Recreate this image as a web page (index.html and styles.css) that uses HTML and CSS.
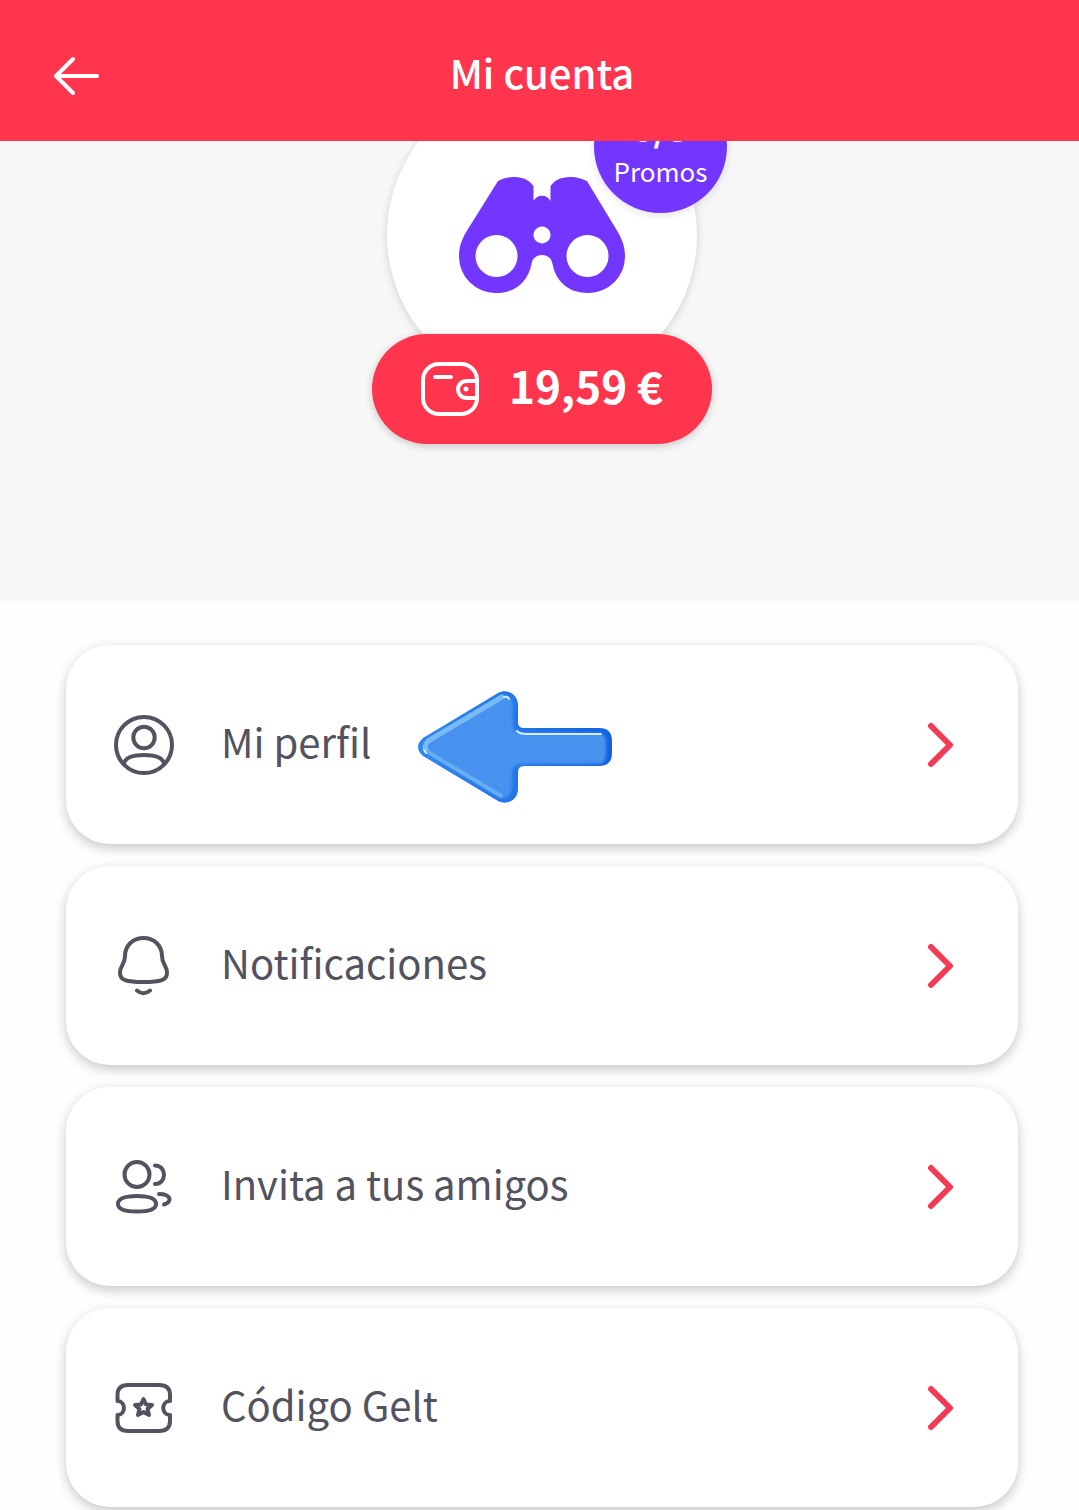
FILE: index.html
```
<!DOCTYPE html>
<html lang="es">
<head>
    <meta charset="UTF-8">
    <meta name="viewport" content="width=device-width, initial-scale=1.0">
    <title>Mi cuenta</title>
    <link rel="stylesheet" href="styles.css">
</head>
<body>
    <header class="topbar">
        <button class="back-btn" type="button" aria-label="Volver">
            <svg width="48" height="40" viewBox="0 0 48 40">
                <path d="M20 3 L3 20 L20 37 M3 20 H44"/>
            </svg>
        </button>
        <h1 class="title">Mi cuenta</h1>
    </header>

    <section class="hero">
        <div class="avatar">
            <svg width="166" height="116" viewBox="0 0 166 116">
                <path fill-rule="evenodd" d="M39 4 C50 -2 67 -2 74.500 9 V24 C78 17 88 17 91.500 24 V9 C99 -2 116 -2 128 4 L157 52 C162 60 166 68 166 79 A36.500 36.500 0 0 1 129 116 C110 116 97 105 93.500 87 C92 75 74 75 72.500 87 C69 105 56 116 37 116 A36.500 36.500 0 0 1 0 79 C0 68 4 60 9 52 Z M37.500 58 a21 21 0 1 0 0.010 0 Z M128.500 58 a21 21 0 1 0 0.010 0 Z M83 49.500 a8.500 8.500 0 1 0 0.010 0 Z"/>
            </svg>
            <div class="badge">
                <strong class="badge-count">0/3</strong>
                <span>Promos</span>
            </div>
        </div>
        <button class="balance" type="button">
            <svg width="58" height="54" viewBox="0 0 58 54">
                <rect x="2" y="2" width="54" height="50" rx="16"/>
                <path d="M14 15 H30 M56 19 H46 C34 19 34 36 46 36 H56"/>
                <circle class="dot" cx="45" cy="27" r="2.500"/>
            </svg>
            <span>19,59 €</span>
        </button>
    </section>

    <nav class="menu">
        <a class="card" href="#perfil">
            <svg class="icon" viewBox="0 0 60 60">
                <circle cx="30" cy="30" r="28"/>
                <circle cx="30" cy="22.500" r="10.700"/>
                <path d="M10 49 C11 42 19 40 30 40 S49 42 50 49"/>
            </svg>
            <span class="label">Mi perfil</span>
            <svg class="pointer" width="194" height="112" viewBox="0 0 194 112">
                <defs>
                    <linearGradient id="edge" x1="0" y1="0" x2="1" y2="0">
                        <stop offset="0" stop-color="#2f86ee"/>
                        <stop offset="0.450" stop-color="#2477ea"/>
                        <stop offset="1" stop-color="#1260e0"/>
                    </linearGradient>
                    <filter id="soft"><feGaussianBlur stdDeviation="1.500"/></filter>
                    <clipPath id="shape">
                        <path d="M5 47 L80 2 C90 -3 100 4 100 14 V31 Q100 37 106 37 H181 Q194 37 194 50 V62 Q194 75 181 75 H106 Q100 75 100 81 V98 C100 108 90 115 80 110 L5 65 Q-5 56 5 47 Z"/>
                    </clipPath>
                </defs>
                <g clip-path="url(#shape)">
                    <rect width="194" height="112" fill="url(#edge)"/>
                    <path filter="url(#soft)" fill="#4792ef" d="M8 51 L82 6 Q95 3 95 15 V36 Q97 42 105 42 H181 Q188 43 188 50 V63 Q188 73 180 73 H104 Q95 73 94 81 V97 Q93 108 83 107 L8 61 Q3 56 8 51 Z"/>
                    <path fill="none" stroke="#78baf4" stroke-width="5" stroke-linecap="round" stroke-linejoin="round" d="M84 6 L10 50 Q5 56 9 60"/>
                    <path fill="none" stroke="#68adf3" stroke-width="4" stroke-linecap="round" d="M10 61 L83 105"/>
                    <path fill="none" stroke="#d5eaff" stroke-width="2" stroke-linecap="round" d="M86 6 Q90 5 91 8 M99 40 Q102 43 108 43 H183 M6 59 L8 62"/>
                </g>
            </svg>
            <svg class="chevron" viewBox="0 0 28 46"><path d="M4 4 L23 23 L4 42"/></svg>
        </a>
        <a class="card" href="#notificaciones">
            <svg class="icon" viewBox="0 0 60 60">
                <path d="M29.500 2 C18.500 2 11 10 11 20 C11 29 6 29 6 37 C6 44 12 46 29.500 46 C47 46 53 44 53 37 C53 29 48 29 48 20 C48 10 40.500 2 29.500 2 Z M23 54.500 Q29.500 60 36 54.500"/>
            </svg>
            <span class="label">Notificaciones</span>
            <svg class="chevron" viewBox="0 0 28 46"><path d="M4 4 L23 23 L4 42"/></svg>
        </a>
        <a class="card" href="#amigos">
            <svg class="icon" viewBox="0 0 60 60">
                <circle cx="23" cy="17.500" r="12.500"/>
                <path d="M41 8.500 C53 8.500 53 27 41 27 M45 37 C57 37 59 45 50 47.500"/>
                <path d="M23 39 C37 39 42 42 42 47 S37 54.500 23 54.500 S4 52 4 47 S9 39 23 39 Z"/>
            </svg>
            <span class="label">Invita a tus amigos</span>
            <svg class="chevron" viewBox="0 0 28 46"><path d="M4 4 L23 23 L4 42"/></svg>
        </a>
        <a class="card" href="#codigo">
            <svg class="icon" viewBox="0 0 60 60">
                <path d="M14 7 H45 Q56 7 56 17 V23 C47 23 47 37 56 37 V43 Q56 53 45 53 H14 Q3.500 53 3.500 43 V37 C12 37 12 23 3.500 23 V17 Q3.500 7 14 7 Z"/>
                <path d="M29.500 21 L32 26.500 L38 27 L33.500 31 L35 37 L29.500 34 L24 37 L25.500 31 L21 27 L27 26.500 Z"/>
            </svg>
            <span class="label">Código Gelt</span>
            <svg class="chevron" viewBox="0 0 28 46"><path d="M4 4 L23 23 L4 42"/></svg>
        </a>
    </nav>
</body>
</html>
```
FILE: styles.css
```
* {
    margin: 0;
    padding: 0;
    box-sizing: border-box;
}

body {
    min-height: 100vh;
    font-family: "Noto Sans CJK SC", "Noto Sans", sans-serif;
    font-size: 40px;
    background: #fefefe;
    color: #53525f;
}

button {
    font: inherit;
    border: none;
    background: none;
    cursor: pointer;
}

svg {
    display: block;
    flex-shrink: 0;
}

/* Header */
.topbar {
    position: relative;
    z-index: 2;
    display: grid;
    grid-template-columns: 48px 1fr 48px;
    align-items: center;
    height: 141px;
    padding: 10px 48px 0 53px;
    background: #ff354d;
    color: white;
}

.back-btn svg {
    fill: none;
    stroke: white;
    stroke-width: 4;
    stroke-linecap: round;
    stroke-linejoin: round;
}

.title {
    padding-bottom: 8px;
    font-size: 40px;
    font-weight: 500;
    line-height: 60px;
    text-align: center;
}

/* Hero */
.hero {
    display: flex;
    flex-direction: column;
    align-items: center;
    height: 460px;
    padding: 0 61px 0 66px;
    background: #f7f7f7;
}

.avatar {
    position: relative;
    display: flex;
    align-items: center;
    justify-content: center;
    width: 310px;
    height: 310px;
    margin-top: -61px;
    border-radius: 50%;
    background: white;
    box-shadow: 0 2px 8px rgba(0, 0, 0, 0.16);
}

.avatar svg {
    fill: #7336ff;
}

.badge {
    position: absolute;
    top: 0;
    right: -30px;
    display: flex;
    flex-direction: column;
    align-items: center;
    justify-content: center;
    gap: 9px;
    width: 133px;
    height: 133px;
    padding-top: 3px;
    border-radius: 50%;
    background: #7336ff;
    color: white;
    font-size: 26px;
    line-height: 36px;
    box-shadow: 0 2px 8px rgba(0, 0, 0, 0.12);
}

.badge-count {
    font-size: 36px;
    font-weight: 700;
}

.balance {
    position: relative;
    display: flex;
    align-items: center;
    justify-content: center;
    gap: 30px;
    width: 340px;
    height: 110px;
    margin-top: -56px;
    border-radius: 55px;
    background: #ff354d;
    color: white;
    font-size: 44px;
    font-weight: 700;
    line-height: 60px;
    box-shadow: 0 2px 8px rgba(0, 0, 0, 0.2);
}

.balance svg {
    fill: none;
    stroke: white;
    stroke-width: 4;
    stroke-linecap: round;
}

.balance span {
    padding-bottom: 8px;
}

.balance .dot {
    fill: white;
    stroke: none;
}

/* Menu */
.menu {
    display: flex;
    flex-direction: column;
    gap: 22px;
    padding: 44px 61px 3px 66px;
}

.card {
    display: flex;
    align-items: center;
    height: 199px;
    padding: 0 63px 0 48px;
    border-radius: 44px;
    background: white;
    color: inherit;
    line-height: 60px;
    text-decoration: none;
    box-shadow: 0 4px 12px rgba(0, 0, 0, 0.22);
}

.icon {
    width: 60px;
    height: 60px;
    margin-right: 44px;
    fill: none;
    stroke: #53525f;
    stroke-width: 4;
    stroke-linecap: round;
    stroke-linejoin: round;
}

.label {
    padding: 0 0 8px 3px;
}

.pointer {
    margin: 4px 0 0 47px;
}

.chevron {
    width: 28px;
    height: 46px;
    margin-left: auto;
    fill: none;
    stroke: #f23b55;
    stroke-width: 6;
    stroke-linecap: round;
    stroke-linejoin: round;
}
```
